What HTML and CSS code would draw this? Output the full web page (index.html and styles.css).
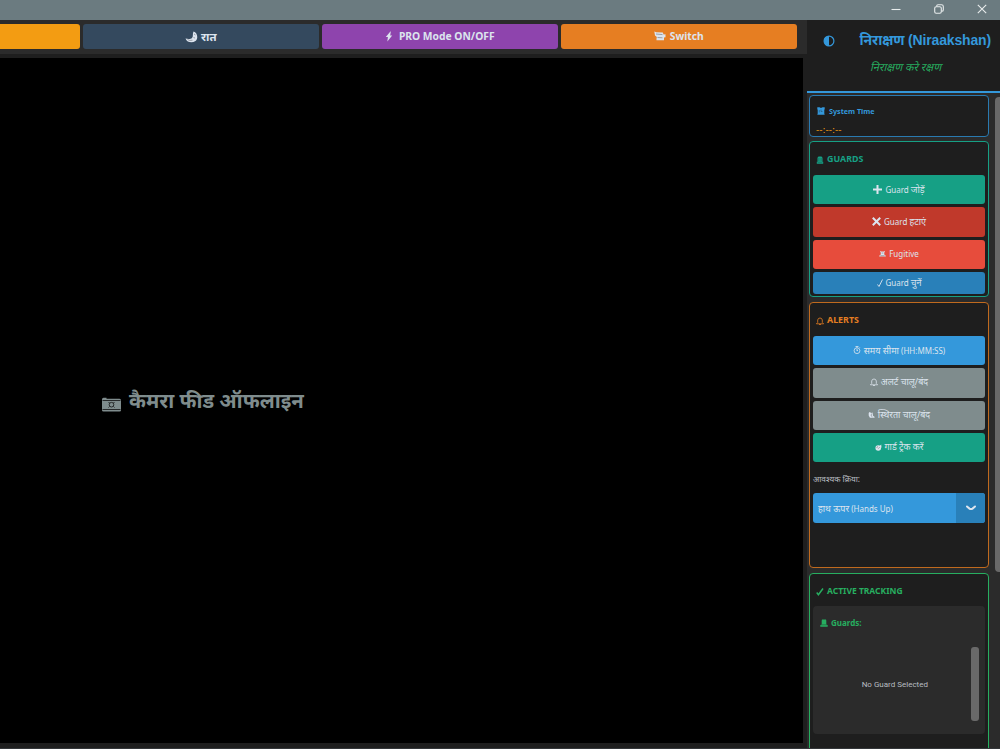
FILE: index.html
```
<!DOCTYPE html>
<html lang="hi">
<head>
    <meta charset="UTF-8">
    <meta name="viewport" content="width=device-width, initial-scale=1.0">
    <title>निराक्षण (Niraakshan)</title>
    <link rel="stylesheet" href="styles.css">
</head>
<body>
    <div class="titlebar">
        <svg class="win-icon" viewBox="0 0 10 10"><path d="M0.5 5.5h9"/></svg>
        <svg class="win-icon" viewBox="0 0 10 10"><rect x="0.7" y="2.7" width="6.6" height="6.6" rx="1.5"/><path d="M2.7 2.5V2q0-1.3 1.3-1.3h3.5q1.8 0 1.8 1.8V6q0 1.3-1.6 1.3"/></svg>
        <svg class="win-icon" viewBox="0 0 10 10"><path d="M0.8 0.8l8.4 8.4M9.2 0.8L0.8 9.2"/></svg>
    </div>

    <div class="window">
        <div class="main">
            <div class="toolbar">
                <button class="tool-btn day"></button>
                <button class="tool-btn night">
                    <svg class="moon" viewBox="0 0 13 12"><path d="M8.500 0.500c4 1 5 7 2 9.500c-3.500 2.500-8.500 1.500-10-2.500c2 .6 5 .9 6.500-.5c1.500-1.500.3-4.500 1.500-6.500z"/><path class="cut" d="M9 3l1.500 1M8.500 6.500l1.500.5M2.500 8.500q2 1.500 5 .7"/></svg>
                    <span>रात</span>
                </button>
                <button class="tool-btn pro">
                    <svg class="bolt" viewBox="0 0 8 12"><path d="M5.500 0.500L0.500 6.500h2.300l-.6 5L7.500 5H5.300L6 .5z"/></svg>
                    <span>PRO Mode ON/OFF</span>
                </button>
                <button class="tool-btn switch">
                    <svg class="cam" viewBox="0 0 12 10"><path d="M0.300 0.500l2 .8l6.500.3l.8 2l1.900-.4v3l-1.500.3v2.800H2.500V7.800L2.800 6L1 4.500z"/><path class="cut" d="M2 3l6.500.6M3.500 6.500l5 .3"/></svg>
                    <span>Switch</span>
                </button>
            </div>
            <div class="feed">
                <svg class="camera" viewBox="0 0 20 15"><path d="M2 0.800h3v1h13q1.500 0 1.500 1.500v10q0 1.200-1.500 1.200H2Q0.500 14.500 0.500 13.300V2.500Q0.500 1 2 0.800z"/><path class="line" d="M1 3.500h18M1 12.500h18"/><circle class="line" cx="10" cy="7.700" r="2.300"/><path class="line" d="M7 5l1 1M13 5l-1 1M7 10.500l1-1M13 10.500l-1-1"/></svg>
                <span>कैमरा फीड ऑफलाइन</span>
            </div>
        </div>

        <div class="sidebar">
            <div class="brand">
                <svg class="logo" viewBox="0 0 12 12"><circle cx="6" cy="6" r="4.900"/><path d="M6 1a5 5 0 0 0 0 10z"/></svg>
                <div class="brand-text">
                    <h1>निराक्षण (Niraakshan)</h1>
                    <p>निराक्षण करे रक्षण</p>
                </div>
            </div>

            <div class="side-body">
                <div class="panels">
                    <div class="panel time">
                        <h3><svg class="icon" viewBox="0 0 8 8"><path d="M0.300 0.200h2.200l1.500.7l1.500-.7h2.200v2.200H7.300v4l.4 1.400H.3L.7 6.400v-4H.3z"/><path class="hole" d="M4 2.500v2h1.500M2.300 3v2.500"/></svg>System Time</h3>
                        <div class="clock">--:--:--</div>
                    </div>

                    <div class="panel guards">
                        <h2><svg class="icon" viewBox="0 0 8 8"><path d="M2.500 0.500h3l1 1.300v3.900h.7v2H.8v-2h.7V1.800z"/><path class="hole" d="M2.900 2v3M5.100 2v3M1.500 6.200h5"/></svg>GUARDS</h2>
                        <button class="btn teal"><svg class="icon plus" viewBox="0 0 8 8"><path d="M4 0v8M0 4h8"/></svg><span>Guard <span class="hi">जोड़ें</span></span></button>
                        <button class="btn red"><svg class="icon cross" viewBox="0 0 8 8"><path d="M.7.700l6.600 6.600M7.300.7L.7 7.300"/></svg><span>Guard <span class="hi">हटाएं</span></span></button>
                        <button class="btn fugitive"><svg class="icon small" viewBox="0 0 8 8"><path d="M1 .8l1.500.9h3L7 .8L6 3v2l1.700 1.500v1H.3v-1L2 5V3z"/><path class="hole" d="M3 3.500h2M1.500 6.500h5"/></svg>Fugitive</button>
                        <button class="btn blue short"><svg class="icon tick" viewBox="0 0 8 8"><path d="M1.500 5.500l1.500 2L6.500.5"/></svg><span>Guard <span class="hi">चुनें</span></span></button>
                    </div>

                    <div class="panel alerts">
                        <h2><svg class="icon bell" viewBox="0 0 8 8"><path d="M.4 6.800h7.200L6.300 5.500V3Q6 1 4 1T1.700 3v2.500zM3 7.500h2"/></svg>ALERTS</h2>
                        <button class="btn sky"><svg class="icon bell" viewBox="0 0 8 8"><circle cx="4" cy="4.700" r="2.900"/><path d="M2.500.5h3M4 .5v1.300M4 3v2l1-.8M6.500 1.300l.6.600"/></svg><span><span class="hi">समय सीमा</span> (HH:MM:SS)</span></button>
                        <button class="btn grey"><svg class="icon bell" viewBox="0 0 8 8"><path d="M.4 6.800h7.200L6.300 5.500V3Q6 1 4 1T1.700 3v2.500zM3 7.500h2"/></svg><span class="hi">अलर्ट चालू/बंद</span></button>
                        <button class="btn grey"><svg class="icon small" viewBox="0 0 8 8"><path d="M.8 2.200l1-1l2 1.200l1.400-.7l.5 3.600l2 1.500l-.4.800H2.200L.8 5z"/><path class="hole" d="M4 3l-.5 2.500L5 6.500"/></svg><span class="hi">स्थिरता चालू/बंद</span></button>
                        <button class="btn teal"><svg class="icon small" viewBox="0 0 8 8"><circle cx="3.700" cy="4.500" r="3.200"/><path d="M4 3l3.200-2.500v2.200L7.800 4z"/><path class="hole" d="M2 4.500q0-1.500 1.500-1.700M3.500 5.500L5.500 3.500"/></svg><span class="hi">गार्ड ट्रैक करें</span></button>
                        <label>आवश्यक क्रिया:</label>
                        <div class="select">
                            <span><span class="hi">हाथ ऊपर</span> (Hands Up)</span>
                            <div class="arrow"><svg viewBox="0 0 10 6"><path d="M1 1.500L3.500 3.600q1.500 1 3 0L9 1.500"/></svg></div>
                        </div>
                    </div>

                    <div class="panel tracking">
                        <h2><svg class="icon check" viewBox="0 0 8 8"><path d="M.7 4.500l1.700 2.200L7 .5"/></svg>ACTIVE TRACKING</h2>
                        <div class="track-box">
                            <h4><svg class="icon" viewBox="0 0 8 8"><path d="M2 0.500h4l.3 1.300v3.400l1.400 1v1.600H.3V6.200l1.400-1V1.800z"/><path class="hole" d="M1 5.800h6"/></svg>Guards:</h4>
                            <div class="track-list">
                                <span>No Guard Selected</span>
                                <div class="track-scroll"></div>
                            </div>
                        </div>
                    </div>
                </div>
                <div class="scrollbar"></div>
            </div>
        </div>
    </div>
</body>
</html>
```
FILE: styles.css
```
* {
    box-sizing: border-box;
}

body {
    margin: 0;
    width: 1000px;
    height: 749px;
    overflow: hidden;
    display: flex;
    flex-direction: column;
    background-color: #1e1e1e;
    font-family: "Noto Sans", "Open Sans", sans-serif;
    color: #dce4ee;
}

h1, h2, h3, h4, p {
    margin: 0;
}

button {
    border: none;
    padding: 0;
    font-family: inherit;
    color: inherit;
}

svg {
    display: block;
    flex: none;
    fill: currentColor;
}

.titlebar {
    height: 20px;
    flex: none;
    background-color: #6b7b80;
    display: flex;
    justify-content: flex-end;
    align-items: center;
    gap: 33px;
    padding: 0 13px 3px 0;
}

.win-icon {
    width: 10px;
    height: 10px;
    fill: none;
    stroke: #e8ecec;
    stroke-width: 1.1;
}

.window {
    flex: 1;
    min-height: 0;
    display: flex;
    border-bottom: 1px solid #34373a;
}

.main {
    width: 807px;
    display: flex;
    flex-direction: column;
    padding-bottom: 5px;
}

.toolbar {
    height: 34px;
    flex: none;
    background-color: #2b2b2b;
    display: flex;
    gap: 2.5px;
    padding: 4px 0;
}

.tool-btn {
    width: 236.5px;
    height: 25px;
    flex: none;
    border-radius: 3px;
    display: flex;
    align-items: center;
    justify-content: center;
    gap: 3px;
    font-size: 10.3px;
    font-weight: bold;
}

.day {
    width: 80px;
    border-radius: 0 3px 3px 0;
    background-color: #f39c12;
}

.night {
    background-color: #34495e;
    font-size: 11.5px;
}

.pro {
    background-color: #8e44ad;
    gap: 6px;
    padding-bottom: 1px;
}

.switch {
    background-color: #e67e22;
    gap: 4px;
    padding-bottom: 1px;
}

.moon { width: 13px; height: 12px; }
.bolt { width: 8px; height: 11px; }
.cam { width: 12px; height: 10px; }

.cut {
    fill: none;
    stroke: #7b7f88;
    stroke-width: 0.7;
}

.feed {
    flex: 1;
    width: 803px;
    margin-top: 4px;
    background-color: #000;
    color: #7f8c8d;
    display: flex;
    align-items: center;
    gap: 7px;
    padding: 0 0 1px 101px;
    font-size: 20.4px;
    font-weight: bold;
}

.camera {
    width: 21px;
    height: 15px;
    margin-top: 8px;
}

.line {
    fill: none;
    stroke: #111;
    stroke-width: 0.8;
}

.sidebar {
    width: 193px;
    display: flex;
    flex-direction: column;
    background-color: #2b2b2b;
}

.brand {
    height: 73px;
    flex: none;
    background-color: #1e1e1e;
    border-bottom: 2px solid #3498db;
    color: #3498db;
    display: flex;
    align-items: flex-start;
    padding: 10px 9px 0 16px;
    justify-content: space-between;
}

.logo {
    width: 12px;
    height: 12px;
    margin-top: 5px;
}

.logo circle {
    fill: none;
    stroke: currentColor;
    stroke-width: 1.2;
}

.brand-text h1 {
    font-family: "Liberation Sans", "Noto Sans", sans-serif;
    font-size: 14px;
    line-height: 20px;
    letter-spacing: -0.15px;
    white-space: nowrap;
}

.brand-text p {
    width: 72px;
    color: #27ae60;
    font-size: 11px;
    line-height: 16px;
    margin: 9px 0 0 12px;
    white-space: nowrap;
    transform: skewX(-14deg);
}

.side-body {
    flex: 1;
    min-height: 0;
    display: flex;
    overflow: hidden;
    padding: 2px 0 0 2px;
}

.panels {
    width: 180px;
    flex: none;
}

.scrollbar {
    width: 8px;
    height: 475px;
    flex: none;
    margin: 2px 0 0 6px;
    border-radius: 4px;
    background-color: #696969;
}

.panel {
    border: 1px solid;
    border-radius: 4px;
    background-color: #1e1e1e;
    margin-bottom: 5px;
    padding: 0 3px;
}

.panel h2, .panel h3, .panel h4 {
    display: flex;
    align-items: center;
    gap: 3px;
    font-size: 8.9px;
    font-weight: bold;
}

.panel h2 {
    height: 33px;
    padding: 0 0 0 3px;
}

.icon {
    width: 8px;
    height: 8px;
}

h2 .icon {
    margin-top: 3px;
}

.hole {
    fill: none;
    stroke: #1e1e1e;
    stroke-width: 0.6;
    opacity: 0.6;
}

.plus, .cross, .bell, .tick, .check {
    fill: none;
    stroke: currentColor;
}

.plus, .cross {
    width: 9px;
    height: 9px;
    stroke-width: 1.8;
}

.bell { stroke-width: 0.8; }
.tick { stroke-width: 0.9; }
.check { stroke-width: 1.5; }
.small { width: 7px; height: 7px; }

.panel.time {
    height: 42px;
    margin-bottom: 4px;
    border-color: #2a7ab0;
    color: #3498db;
}

.panel.time h3 {
    height: 30px;
    font-size: 7.2px;
    gap: 4px;
    padding-left: 4px;
}

.clock {
    color: #f39c12;
    font-family: "DejaVu Sans", sans-serif;
    font-size: 9px;
    line-height: 9px;
    padding-left: 3px;
}

.guards {
    height: 156px;
    border-color: #16a085;
    color: #16a085;
}

.alerts {
    height: 266px;
    border-color: #c06a1e;
    color: #e67e22;
}

.tracking {
    height: 200px;
    border-color: #27ae60;
    color: #27ae60;
}

.panel.tracking h2 {
    height: 32px;
    font-size: 8.5px;
}

.btn {
    width: 100%;
    height: 29.3px;
    border-radius: 3px;
    margin-bottom: 3px;
    padding-bottom: 1px;
    display: flex;
    align-items: center;
    justify-content: center;
    gap: 3px;
    font-size: 8px;
    color: #dce4ee;
}

.hi {
    font-size: 9px;
    line-height: 10px;
}

.teal { background-color: #16a085; }
.red { background-color: #c0392b; }
.fugitive { background-color: #e74c3c; }
.blue { background-color: #2980b9; }
.sky { background-color: #3498db; }
.grey { background-color: #7f8c8d; }

.short {
    height: 22.5px;
    gap: 1px;
}

.alerts label {
    display: block;
    height: 28px;
    line-height: 28px;
    font-size: 8.2px;
    color: #b8bcc0;
}

.select {
    height: 30px;
    border-radius: 3px;
    background-color: #3498db;
    color: #dce4ee;
    display: flex;
    align-items: center;
    justify-content: space-between;
    overflow: hidden;
    padding-left: 5px;
    font-size: 8px;
}

.arrow {
    width: 29px;
    height: 30px;
    background-color: #2980b9;
    display: flex;
    align-items: center;
    justify-content: center;
}

.arrow svg {
    width: 10px;
    height: 6px;
    fill: none;
    stroke: #dce4ee;
    stroke-width: 2;
    stroke-linecap: round;
}

.track-box {
    height: 128px;
    border-radius: 4px;
    background-color: #2b2b2b;
    padding: 0 6px 0 7px;
}

.panel h4 {
    height: 33px;
    font-size: 8px;
}

.track-list {
    height: 90px;
    display: flex;
    align-items: center;
    justify-content: flex-end;
    gap: 43px;
    font-family: Roboto, sans-serif;
    font-size: 8px;
    color: #b8bcc0;
}

.track-scroll {
    width: 8px;
    height: 74px;
    border-radius: 3px;
    background-color: #696969;
}
```
